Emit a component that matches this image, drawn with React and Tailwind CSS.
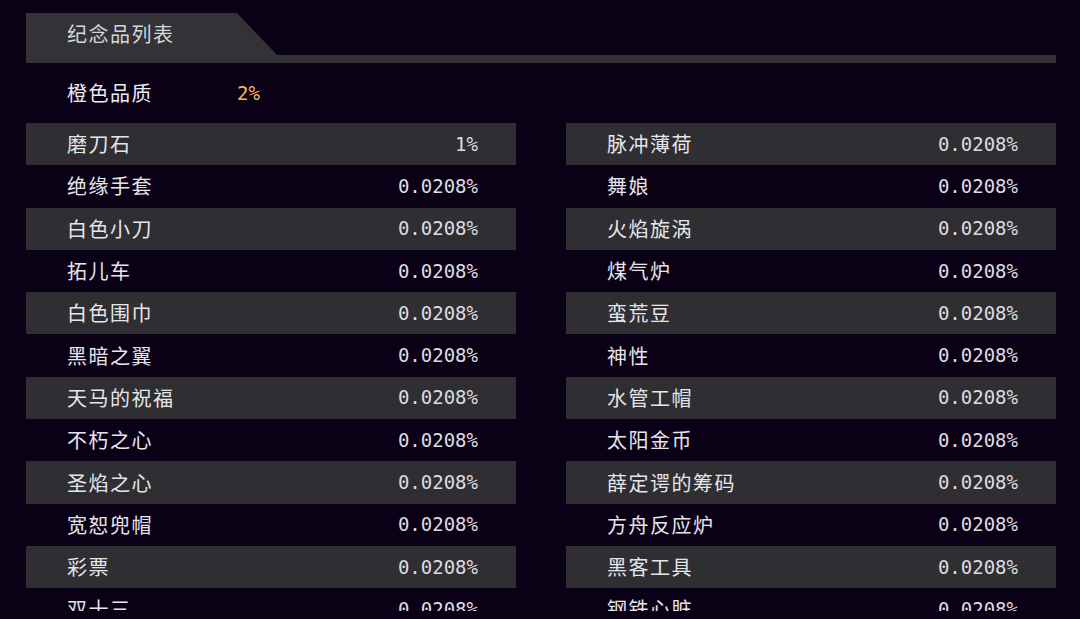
import React from "react";

const LEFT = [
  ["磨刀石", "1%"],
  ["绝缘手套", "0.0208%"],
  ["白色小刀", "0.0208%"],
  ["拓儿车", "0.0208%"],
  ["白色围巾", "0.0208%"],
  ["黑暗之翼", "0.0208%"],
  ["天马的祝福", "0.0208%"],
  ["不朽之心", "0.0208%"],
  ["圣焰之心", "0.0208%"],
  ["宽恕兜帽", "0.0208%"],
  ["彩票", "0.0208%"],
  ["双十三", "0.0208%"],
];

const RIGHT = [
  ["脉冲薄荷", "0.0208%"],
  ["舞娘", "0.0208%"],
  ["火焰旋涡", "0.0208%"],
  ["煤气炉", "0.0208%"],
  ["蛮荒豆", "0.0208%"],
  ["神性", "0.0208%"],
  ["水管工帽", "0.0208%"],
  ["太阳金币", "0.0208%"],
  ["薛定谔的筹码", "0.0208%"],
  ["方舟反应炉", "0.0208%"],
  ["黑客工具", "0.0208%"],
  ["钢铁心脏", "0.0208%"],
];

const cjk = "[font-family:'Noto_Sans_CJK_SC','Noto_Sans',sans-serif]";

function Row({ name, value, shaded }) {
  return (
    <div
      className={`flex h-[42.3px] shrink-0 items-center justify-between pl-[41px] pr-[38px] ${
        shaded ? "bg-[#2f2e32]" : ""
      }`}
    >
      <span className={`${cjk} text-[20px] tracking-[1.5px] text-[#e6e6ea] leading-none`}>{name}</span>
      <span className="[font-family:'DejaVu_Sans_Mono',monospace] text-[19px] leading-none text-[#dcdce0]">
        {value}
      </span>
    </div>
  );
}

function Column({ items }) {
  return (
    <div className="flex flex-col">
      {items.map(([name, value], i) => (
        <Row key={name} name={name} value={value} shaded={i % 2 === 0} />
      ))}
    </div>
  );
}

export default function App() {
  return (
    <div className="h-[619px] w-[1080px] overflow-hidden bg-[#0b0117] pl-[26px] pr-[24px] pt-[13px]">
      {/* header tab */}
      <div className="flex h-[42px] w-[251px] items-center bg-[#333236] pl-[41px] [clip-path:polygon(0_0,211px_0,100%_100%,0_100%)]">
        <span className={`${cjk} text-[20px] tracking-[1.5px] text-[#d6d6da] leading-none`}>纪念品列表</span>
      </div>
      <div className="h-[8px] bg-[#333236]" />

      {/* quality */}
      <div className="flex h-[60px] items-center pl-[41px]">
        <span className={`${cjk} w-[170px] text-[20px] tracking-[1.5px] text-[#ececf0] leading-none`}>橙色品质</span>
        <span className="[font-family:'DejaVu_Sans_Mono',monospace] text-[19px] leading-none text-[#f2b85a]">2%</span>
      </div>

      {/* list */}
      <div className="grid h-[488px] grid-cols-2 gap-x-[50px] overflow-hidden">
        <Column items={LEFT} />
        <Column items={RIGHT} />
      </div>
    </div>
  );
}
